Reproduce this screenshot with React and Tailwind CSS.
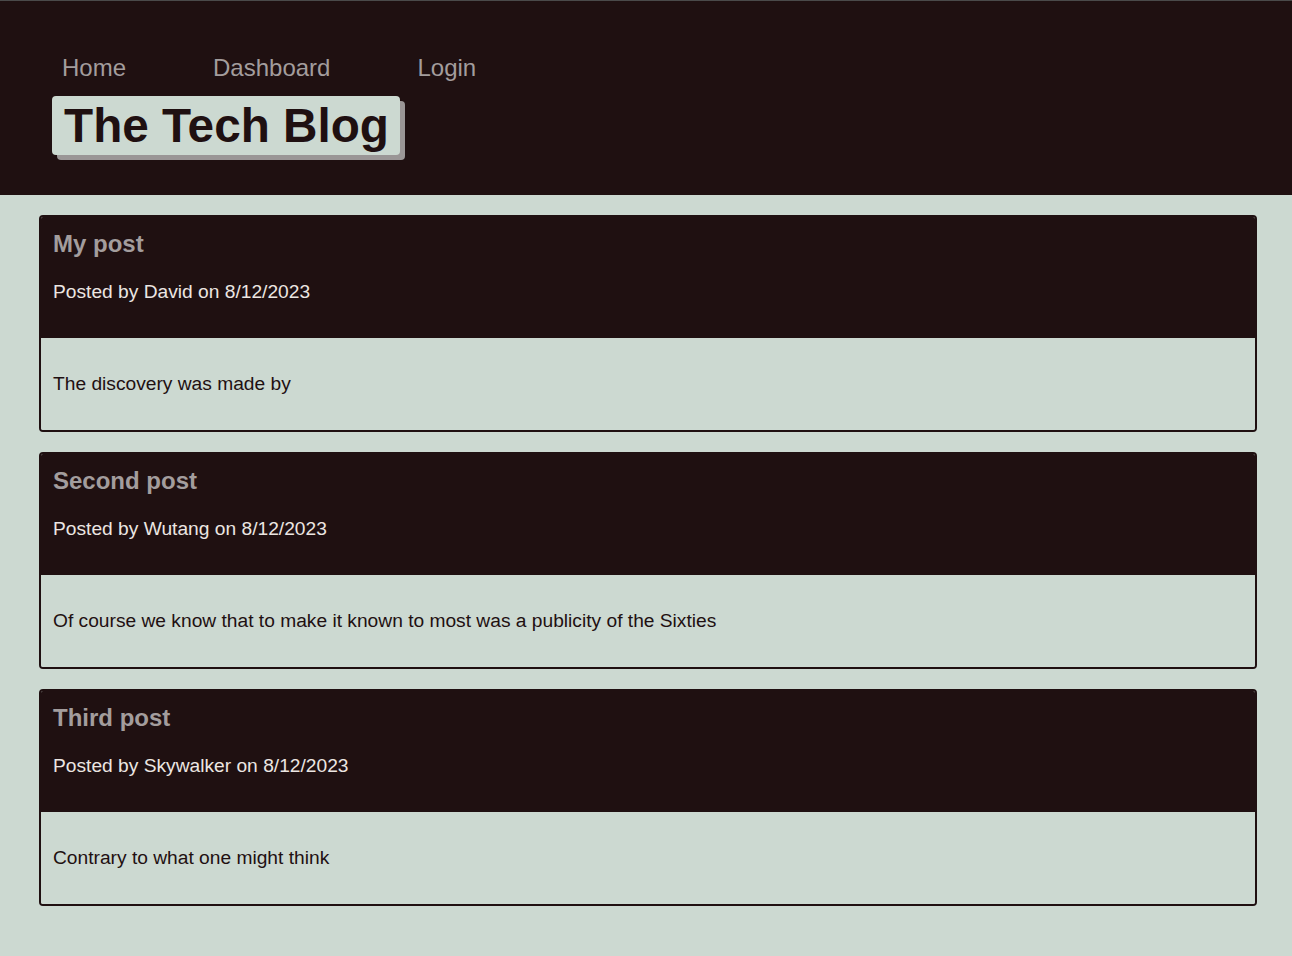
import React from 'react'

const posts = [
  { title: 'My post', author: 'David', date: '8/12/2023', body: 'The discovery was made by' },
  { title: 'Second post', author: 'Wutang', date: '8/12/2023', body: 'Of course we know that to make it known to most was a publicity of the Sixties' },
  { title: 'Third post', author: 'Skywalker', date: '8/12/2023', body: 'Contrary to what one might think' },
]

function PostCard({ post }) {
  return (
    <article className="rounded-[4px] border-2 border-[#1f1011] overflow-hidden">
      <div className="bg-[#1f1011] h-[121px] px-[12px] pt-[12px]">
        <h2 className="text-[24px] leading-[30px] font-bold text-[#a39d9d]">{post.title}</h2>
        <p className="mt-[22px] text-[19.2px] leading-[22px] text-[#ece6e2]">
          Posted by {post.author} on {post.date}
        </p>
      </div>
      <div className="bg-[#ccd9d1] h-[92px] px-[12px] pt-[35px]">
        <p className="text-[19.2px] leading-[22px] text-[#1f1011]">{post.body}</p>
      </div>
    </article>
  )
}

export default function App() {
  return (
    <div className="min-h-[956px] bg-[#ccd9d1]" style={{ fontFamily: '"Liberation Sans", Arial, sans-serif' }}>
      <header className="bg-[#1f1011] border-t border-[#4a4a4a] h-[195px] pt-[53px] pl-[52px]">
        <nav className="flex gap-[87px] pl-[10px] text-[24px] leading-[28px] text-[#a39d9d]">
          <a>Home</a>
          <a>Dashboard</a>
          <a>Login</a>
        </nav>
        <div className="mt-[14px] inline-block bg-[#ccd9d1] rounded-[4px] pl-[12px] pr-[11px] h-[59px] shadow-[5px_5px_0_#9a9696]">
          <h1 className="text-[47.7px] leading-[59px] font-bold text-[#1f1011]">The Tech Blog</h1>
        </div>
      </header>
      <main className="ml-[39px] mr-[35px] pt-[20px] pb-[40px] flex flex-col gap-[20px]">
        {posts.map(p => <PostCard key={p.title} post={p} />)}
      </main>
    </div>
  )
}
